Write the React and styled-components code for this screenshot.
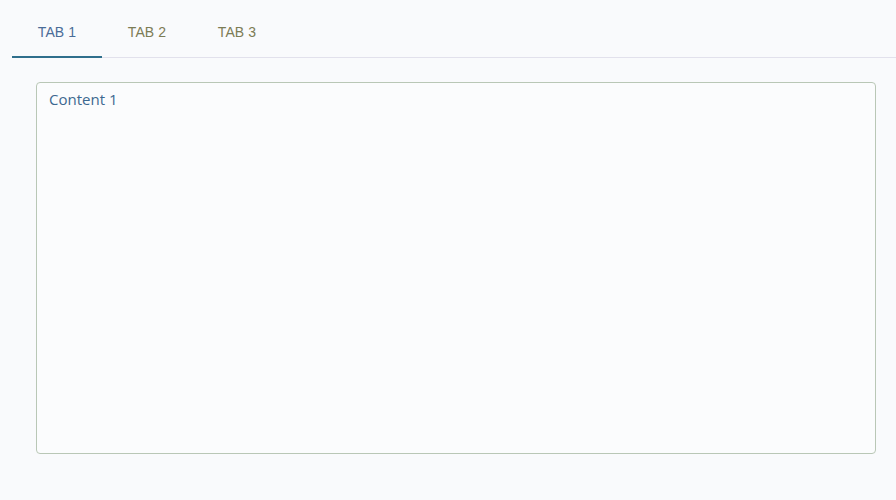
import React, { useState } from 'react';
import styled, { createGlobalStyle } from 'styled-components';

const GlobalStyle = createGlobalStyle`
  html, body {
    margin: 0;
    padding: 0;
    background: #f9fafc;
  }
`;

const Page = styled.div`
  width: 896px;
  height: 500px;
  background: #f9fafc;
  box-sizing: border-box;
`;

const TabBar = styled.div`
  display: flex;
  margin-left: 12px;
  height: 58px;
  box-sizing: border-box;
  border-bottom: 1px solid #e2e1ec;
`;

const Tab = styled.button`
  position: relative;
  width: 90px;
  height: 57px;
  padding: 7px 0 0;
  border: none;
  background: transparent;
  font-family: "Liberation Sans", Arial, sans-serif;
  font-size: 14px;
  letter-spacing: 0.1px;
  text-transform: uppercase;
  color: ${({ $active }) => ($active ? '#4a6c98' : '#7c7c55')};
  cursor: pointer;

  &::after {
    content: '';
    position: absolute;
    left: 0;
    right: 0;
    bottom: -1px;
    height: 2px;
    background: ${({ $active }) => ($active ? '#2f6f8c' : 'transparent')};
  }
`;

const Panel = styled.div`
  margin: 24px 20px 0 36px;
  height: 372px;
  box-sizing: border-box;
  border: 1px solid #b9c7b6;
  border-radius: 4px;
  background: #fbfcfd;
  padding: 6px 12px;
  font-family: "Open Sans", "Noto Sans", sans-serif;
  font-size: 15px;
  color: #3d6890;
`;

const tabs = ['Tab 1', 'Tab 2', 'Tab 3'];

const App = () => {
  const [active, setActive] = useState(0);

  return (
    <Page>
      <GlobalStyle />
      <TabBar>
        {tabs.map((t, i) => (
          <Tab key={t} $active={i === active} onClick={() => setActive(i)}>
            {t}
          </Tab>
        ))}
      </TabBar>
      <Panel>Content {active + 1}</Panel>
    </Page>
  );
};

export default App;
